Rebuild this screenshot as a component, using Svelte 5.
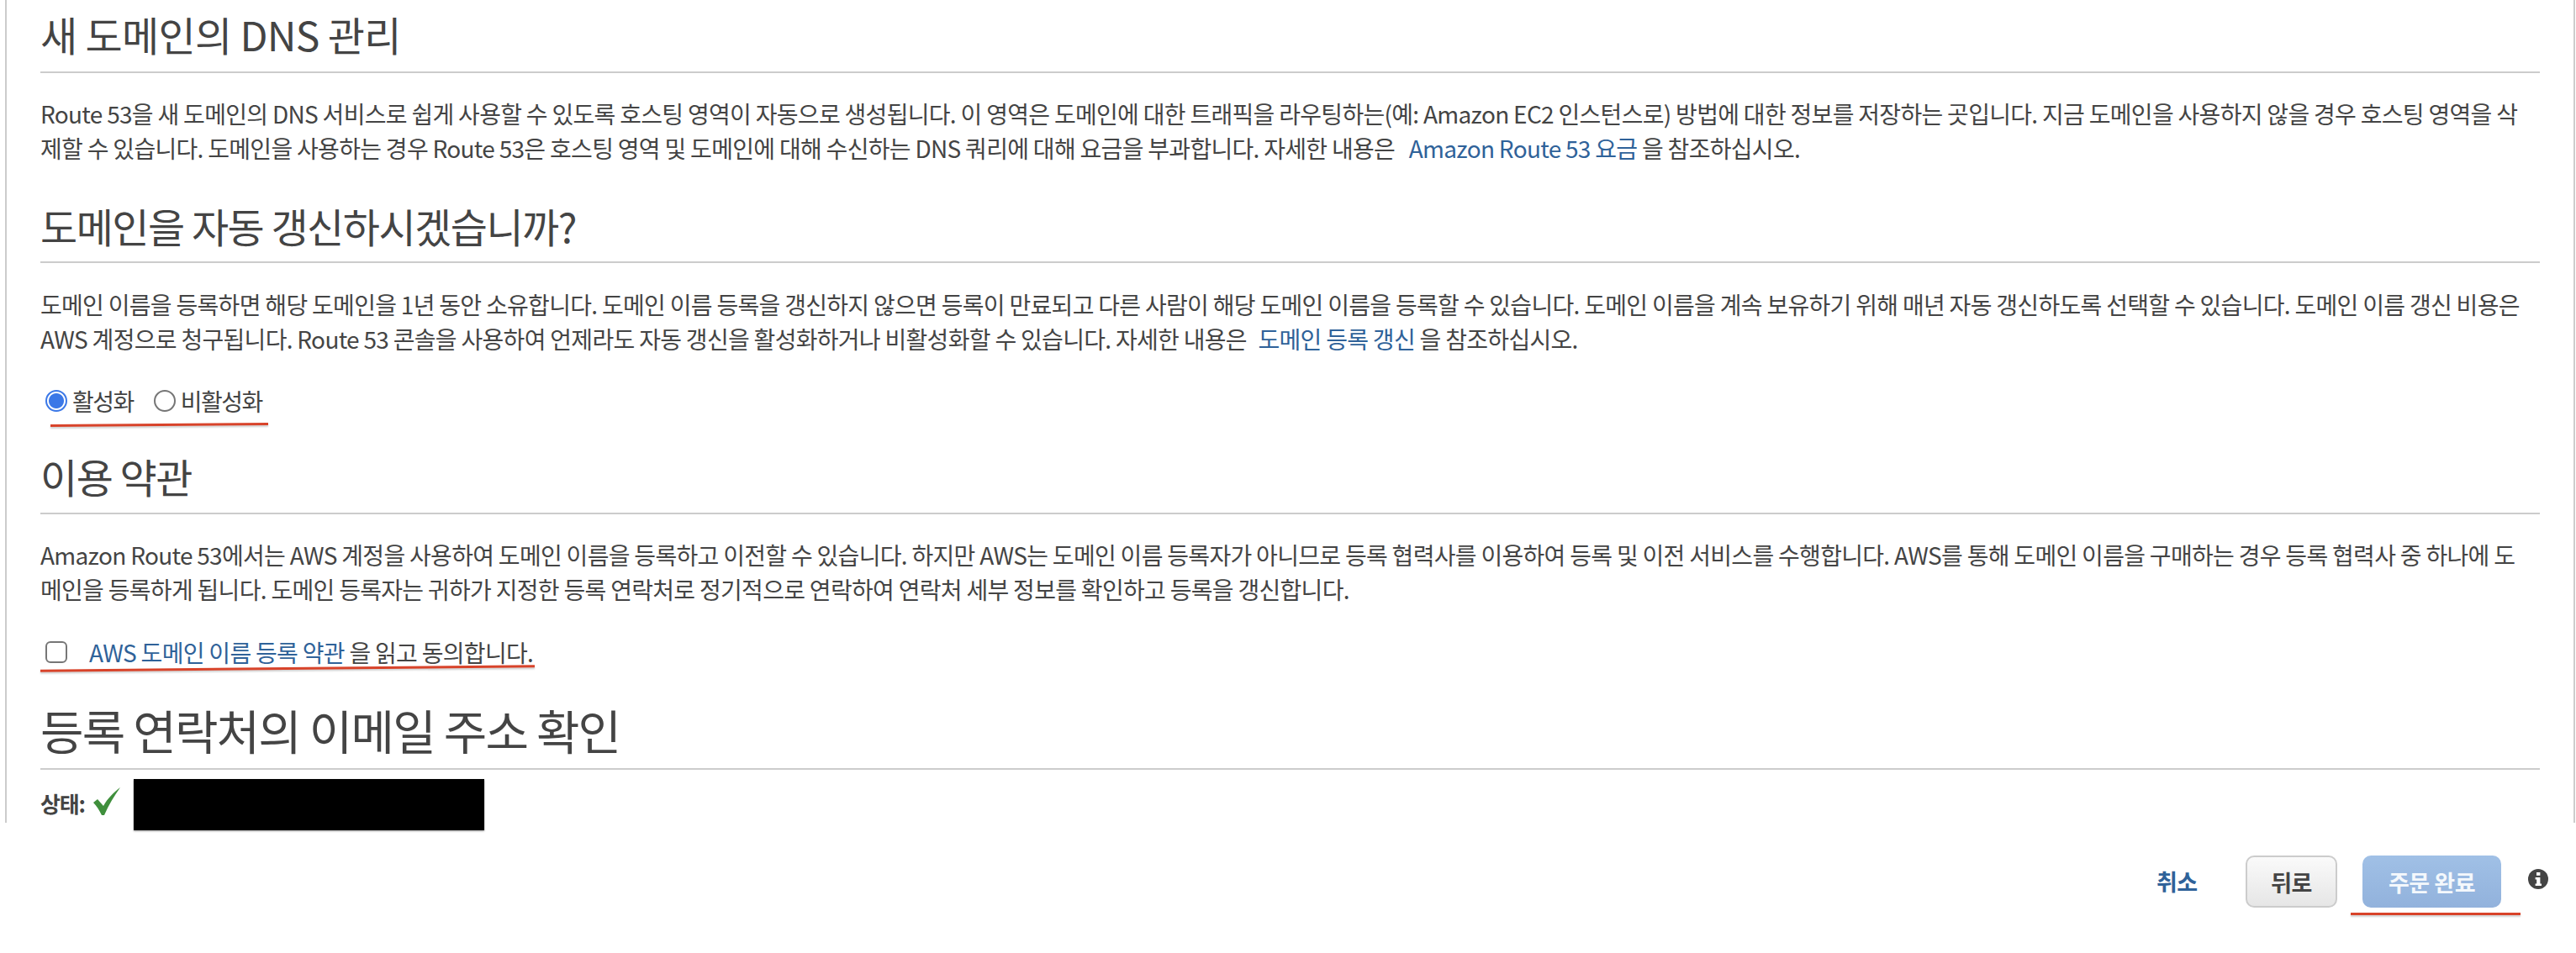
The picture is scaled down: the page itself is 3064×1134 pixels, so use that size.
<script>
  // Last steps of the Route 53 domain registration wizard. Line breaks are fixed so
  // the paragraphs wrap where they do in the console.
  let autoRenew = $state('on');
  let agreed = $state(false);

  const dnsLines = [
    'Route 53을 새 도메인의 DNS 서비스로 쉽게 사용할 수 있도록 호스팅 영역이 자동으로 생성됩니다. 이 영역은 도메인에 대한 트래픽을 라우팅하는(예: Amazon EC2 인스턴스로) 방법에 대한 정보를 저장하는 곳입니다. 지금 도메인을 사용하지 않을 경우 호스팅 영역을 삭',
    '제할 수 있습니다. 도메인을 사용하는 경우 Route 53은 호스팅 영역 및 도메인에 대해 수신하는 DNS 쿼리에 대해 요금을 부과합니다. 자세한 내용은 '
  ];
  const renewLines = [
    '도메인 이름을 등록하면 해당 도메인을 1년 동안 소유합니다. 도메인 이름 등록을 갱신하지 않으면 등록이 만료되고 다른 사람이 해당 도메인 이름을 등록할 수 있습니다. 도메인 이름을 계속 보유하기 위해 매년 자동 갱신하도록 선택할 수 있습니다. 도메인 이름 갱신 비용은',
    'AWS 계정으로 청구됩니다. Route 53 콘솔을 사용하여 언제라도 자동 갱신을 활성화하거나 비활성화할 수 있습니다. 자세한 내용은 '
  ];
  const termsLines = [
    'Amazon Route 53에서는 AWS 계정을 사용하여 도메인 이름을 등록하고 이전할 수 있습니다. 하지만 AWS는 도메인 이름 등록자가 아니므로 등록 협력사를 이용하여 등록 및 이전 서비스를 수행합니다. AWS를 통해 도메인 이름을 구매하는 경우 등록 협력사 중 하나에 도',
    '메인을 등록하게 됩니다. 도메인 등록자는 귀하가 지정한 등록 연락처로 정기적으로 연락하여 연락처 세부 정보를 확인하고 등록을 갱신합니다.'
  ];
</script>

<div class="page">
  <main class="panel">
    <section class="first">
      <h2>새 도메인의 DNS 관리</h2>
      <p>{dnsLines[0]}<br />{dnsLines[1]}<a href="#pricing">Amazon Route 53 요금</a> 을 참조하십시오.</p>
    </section>

    <section class="renew">
      <h2>도메인을 자동 갱신하시겠습니까?</h2>
      <p>{renewLines[0]}<br />{renewLines[1]}<a href="#renew">도메인 등록 갱신</a> 을 참조하십시오.</p>
      <div class="radios">
        <label><input type="radio" bind:group={autoRenew} value="on" />활성화</label>
        <label><input type="radio" bind:group={autoRenew} value="off" />비활성화</label>
        <i class="mark mark-radios"></i>
      </div>
    </section>

    <section class="terms">
      <h2>이용 약관</h2>
      <p>{termsLines[0]}<br />{termsLines[1]}</p>
      <label class="agree">
        <input type="checkbox" bind:checked={agreed} />
        <span><a href="#terms">AWS 도메인 이름 등록 약관</a> 을 읽고 동의합니다.</span>
        <i class="mark mark-agree"></i>
      </label>
    </section>

    <section class="verify">
      <h2 class="big">등록 연락처의 이메일 주소 확인</h2>
      <div class="status">
        <b>상태:</b>
        <svg class="check" viewBox="0 0 34 34" aria-hidden="true"><path d="M1 18l5-4 7 8C18 13 25 6 33 0 26 10 19 21 14 33h-3C8 27 5 22 1 18z" /></svg>
        <span class="redact"></span>
      </div>
    </section>
  </main>

  <footer>
    <a class="cancel" href="#cancel">취소</a>
    <button class="back">뒤로</button>
    <div class="submit">
      <button class="primary" disabled>주문 완료</button>
      <i class="mark mark-submit"></i>
    </div>
    <svg class="info" viewBox="0 0 24 24" aria-hidden="true">
      <circle cx="12" cy="12" r="12" />
      <rect x="10" y="4" width="4.4" height="3.8" fill="#fff" />
      <path d="M8.6 10h5.8v7.6h1.6v2.4H8.6v-2.4h1.6v-5.2H8.6z" fill="#fff" />
    </svg>
  </footer>
</div>

<style>
  :global(body) { margin: 0; background: #fff; }

  .page {
    width: 3064px;
    height: 1134px;
    overflow: hidden;
    color: #444;
    font-family: "Noto Sans CJK KR", "Liberation Sans", sans-serif;
  }

  .panel {
    box-sizing: border-box;
    height: 979px;
    margin: 0 0 0 6px;
    width: 3057px;
    padding: 0 40px;
    border-left: 2px solid #ccc;
    border-right: 2px solid #ccc;
  }

  h2 {
    margin: 0;
    font-weight: 400;
    font-size: 48px;
    line-height: 54px;
    letter-spacing: -1.5px;
    border-bottom: 2px solid #ccc;
  }
  h2.big { font-size: 56px; line-height: 66px; letter-spacing: -1.8px; }

  p {
    margin: 0;
    font-size: 28px;
    line-height: 41px;
    letter-spacing: -0.7px;
    white-space: nowrap;
  }

  a { color: #2f6299; text-decoration: none; }
  p a { margin-left: 8px; }

  .first { padding-top: 13px; }
  .first h2 { padding-bottom: 18px; letter-spacing: -0.7px; }
  .first p { margin-top: 28px; }
  .first p a { margin-left: 11px; }

  .renew { margin-top: 44px; }
  .renew h2 { padding-bottom: 16px; }
  .renew p { margin-top: 29px; }

  .radios {
    position: relative;
    display: flex;
    gap: 24px;
    margin: 33px 0 0 6px;
    height: 40px;
    align-items: center;
    font-size: 28px;
    letter-spacing: -1.5px;
  }
  .radios label { display: flex; align-items: center; gap: 6px; }

  input {
    appearance: none;
    box-sizing: border-box;
    flex: none;
    width: 26px;
    height: 26px;
    margin: 0;
    border: 2px solid #767676;
    background: #fff;
  }
  input[type="radio"] { border-radius: 50%; }
  input[type="radio"]:checked {
    border-color: #3b78e7;
    background: radial-gradient(circle, #3b78e7 0 8.5px, #fff 9.5px);
  }
  input[type="checkbox"] { border-radius: 6px; }
  input[type="checkbox"]:checked { background: #3b78e7; border-color: #3b78e7; }

  .terms { margin-top: 42px; }
  .terms h2 { padding-bottom: 17px; }
  .terms p { margin-top: 28px; }

  .agree {
    position: relative;
    display: flex;
    align-items: center;
    gap: 26px;
    margin: 34px 0 0 6px;
    height: 40px;
    font-size: 28px;
    letter-spacing: -0.7px;
  }

  .verify { margin-top: 39px; }
  .verify h2 { padding-bottom: 13px; }

  .status {
    display: flex;
    align-items: flex-start;
    height: 62px;
    margin-top: 11px;
  }
  .status b { font-size: 26px; line-height: 36px; letter-spacing: -1.2px; margin-top: 11px; }
  .check { width: 34px; height: 34px; margin: 10px 0 0 9px; fill: #3f8f3c; }
  .redact {
    width: 417px;
    height: 61px;
    margin-left: 15px;
    background: #000;
    box-shadow: 0 1px 2px rgba(0, 0, 0, 0.4);
  }

  .mark {
    position: absolute;
    display: block;
    height: 3px;
    background: #d8432a;
    box-shadow: 0 2px 2px rgba(0, 0, 0, 0.18);
  }
  .mark-radios { left: 6px; top: 47px; width: 259px; transform: rotate(-0.45deg); }
  .mark-agree { left: -6px; top: 38px; width: 588px; transform: rotate(-0.55deg); }
  .mark-submit { left: -14px; top: 68px; width: 202px; }

  footer {
    display: flex;
    align-items: flex-start;
    margin-top: 39px;
    padding-left: 2565px;
  }
  .cancel { font-size: 27px; font-weight: 700; line-height: 62px; width: 106px; letter-spacing: -0.5px; }
  button {
    box-sizing: border-box;
    height: 62px;
    border-radius: 10px;
    font: 700 27px "Noto Sans CJK KR", sans-serif;
    letter-spacing: -0.5px;
  }
  .back {
    width: 109px;
    border: 2px solid #ccc;
    color: #444;
    background: linear-gradient(#fafafa, #e6e6e6);
  }
  .submit { position: relative; margin-left: 30px; }
  .primary {
    display: block;
    width: 165px;
    border: 0;
    color: #f4f8fc;
    background: linear-gradient(#a0c0e6, #92b2dc);
  }
  .info { width: 24px; height: 24px; margin: 16px 0 0 32px; fill: #444; }
</style>
